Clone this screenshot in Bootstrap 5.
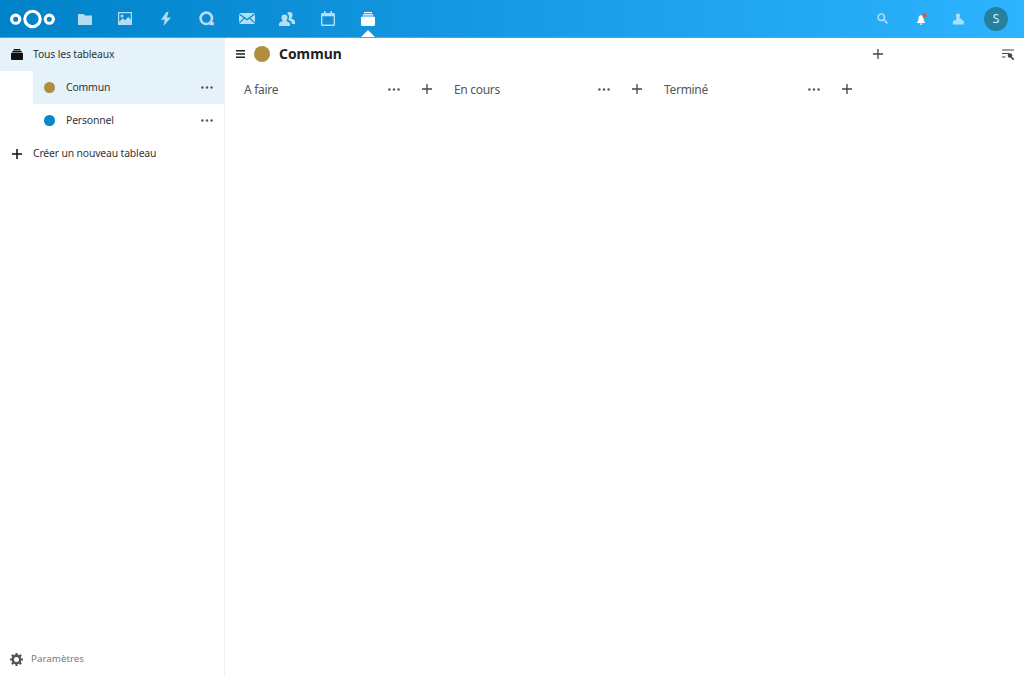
<!DOCTYPE html>
<html lang="fr">
<head>
<meta charset="utf-8">
<title>Deck</title>
<link href="https://cdn.jsdelivr.net/npm/bootstrap@5.3.0/dist/css/bootstrap.min.css" rel="stylesheet">
<style>
html,body{height:100%;overflow:hidden}
body{font-family:"Noto Sans","Open Sans",sans-serif;font-size:12px;color:#444;background:#fff}
.topbar{height:38px;background:linear-gradient(90deg,#0082c9 0%,#2db3ff 100%);border-bottom:1px solid #2db3fb;flex:none}
.logo{margin-left:10px;width:45px;height:20px;flex:none}
.apps{margin-left:9.5px}
.app{width:40.5px;height:37px;display:flex;align-items:center;justify-content:center;position:relative;opacity:.7}
.app.active{opacity:1}
.app.active::after{content:"";position:absolute;left:50%;bottom:0;margin-left:-7px;border:7px solid transparent;border-top:0;border-bottom-color:#fff}
.right-icon{width:38px;height:37px;display:flex;align-items:center;justify-content:center}
.dim{opacity:.6}
.avatar{width:24px;height:24px;border-radius:50%;background:#25829f;color:#d5eaf5;font-size:12.5px;line-height:24px;text-align:center;margin:0 16px 0 7px}
.sidebar{width:225px;border-right:1px solid #eee;flex:none}
.row-item{height:33px;display:flex;align-items:center;font-size:10.4px;letter-spacing:-.15px;color:#333}
.row-item.on{background:#e5f2fa}
.lead-icon{width:33px;display:flex;justify-content:center;flex:none}
.sub{margin-left:33px;padding-left:11px}
.sub .dot{width:10.5px;height:10.5px;border-radius:50%;margin-right:11.5px;flex:none}
.sub .more{margin-left:auto;margin-right:11px;width:12px}
.settings{height:32px;padding-left:10px;font-size:9.8px;letter-spacing:0;color:#7b7b7b;gap:8px}
.main-head{height:33px;padding-left:11px;padding-bottom:1px}
.board-dot{width:16px;height:16px;border-radius:50%;background:#b08d3f;margin:0 9px 0 9px;flex:none}
.title{font-size:13.9px;font-weight:700;color:#222}
.add-card{margin-left:auto;margin-right:119px}
.stack-list{padding-left:19px}
.stack{width:210px;height:36px;display:flex;align-items:center;font-size:12px;letter-spacing:-.3px;color:#555}
.stack .name{width:144px;padding-top:2px}
.stack .more{width:14px;margin-right:20px}
.filter{margin-right:10px}
.bell{margin-left:4px}
svg{display:block}
</style>
</head>
<body class="d-flex flex-column">
<nav class="topbar d-flex align-items-center">
  <svg class="logo" viewBox="0 0 45 20" aria-label="Nextcloud">
    <g fill="none" stroke="#fff" stroke-width="3.100"><circle cx="22.500" cy="10" r="7.700"/><circle cx="5.700" cy="10.200" r="4.100"/><circle cx="39.300" cy="10.200" r="4.100"/></g>
  </svg>
  <div class="apps d-flex">
    <div class="app"><svg width="14" height="14" viewBox="0 0 14 14"><path fill="#fff" d="M0 2h5.500l1.500 1.600h7V13H0z"/></svg></div>
    <div class="app"><svg width="14" height="13" viewBox="0 0 14 13"><path fill="#fff" fill-rule="evenodd" d="M0 0h14v13H0zM1.200 1.200v8.200l3.600-3.200 2.400 2 3-3.500 2.600 3V1.200zM4 2.500a1.500 1.500 0 1 1 0 3 1.500 1.500 0 0 1 0-3z"/></svg></div>
    <div class="app"><svg width="10" height="14" viewBox="0 0 10 14"><path fill="#fff" d="M5.500 0 0 7.800h3.700L2.600 14 10 5.500H5.800L7.600 0z"/></svg></div>
    <div class="app"><svg width="15" height="15" viewBox="0 0 15 15"><circle cx="7.300" cy="7.300" r="5.700" fill="none" stroke="#fff" stroke-width="2.600"/><path fill="#fff" d="M10 11h4.800v3.200H11z"/></svg></div>
    <div class="app"><svg width="16" height="11" viewBox="0 0 16 11"><path fill="#fff" d="M0 0h16L8 5.800zM0 1.500v8l4.600-4.600zM16 1.500v8l-4.600-4.600zM5.500 5.700 0 11h16l-5.500-5.300L8 7.500z"/></svg></div>
    <div class="app"><svg width="16" height="14" viewBox="0 0 16 14"><path fill="#fff" d="M10.500 0a3 3 0 0 1 3 3.200c0 1.600-.8 2.600-1.500 3.300 1.600.6 4 1.200 4 3.200V12h-3c0-2.500-2-3.400-3.800-4.300.8-1.200 1-2.200.7-3.700C9.500 2.500 8.900 1.300 8 .9 8.700.3 9.500 0 10.500 0zM5.500 2.500a3 3 0 0 1 3 3.200c0 1.600-.8 2.600-1.500 3.300 1.600.6 4 1.200 4 3.200V14H0v-1.800c0-2 2.400-2.600 4-3.200-.7-.7-1.500-1.700-1.500-3.300a3 3 0 0 1 3-3.200z"/></svg></div>
    <div class="app"><svg width="14" height="15" viewBox="0 0 14 15"><path fill="#fff" fill-rule="evenodd" d="M3 0h1.600v2h4.800V0H11v2h1.500A1.500 1.500 0 0 1 14 3.500v10a1.500 1.500 0 0 1-1.500 1.500h-11A1.500 1.500 0 0 1 0 13.500v-10A1.500 1.500 0 0 1 1.500 2H3zM1.400 5.200v8.400h11.200V5.200z"/></svg></div>
    <div class="app active"><svg width="14" height="14" viewBox="0 0 14 14"><path fill="#fff" d="M3 0h8v1.300H3zM1.800 2.200h10.400v1.400H1.800zM1.500 4.600h11A1.500 1.500 0 0 1 14 6v6.500a1.500 1.500 0 0 1-1.500 1.500h-11A1.500 1.500 0 0 1 0 12.500V6a1.500 1.500 0 0 1 1.500-1.500z"/></svg></div>
  </div>
  <div class="ms-auto d-flex align-items-center">
    <div class="right-icon dim"><svg width="11" height="11" viewBox="0 0 11 11"><circle cx="4.300" cy="4.300" r="3.200" fill="none" stroke="#fff" stroke-width="1.500"/><path stroke="#fff" stroke-width="1.800" d="m6.700 6.700 3.700 3.700"/></svg></div>
    <div class="right-icon"><svg class="bell" width="12" height="12" viewBox="0 0 12 12"><path fill="#fff" d="M4.500 2.200C2.800 2.800 2.500 4 2.500 5.500c0 1.800-.6 2.800-1.500 3.500v1h8V9c-.9-.7-1.500-1.700-1.500-3.500 0-1.500-.3-2.700-2-3.300zM3.700 10.500h2.600a1.300 1.300 0 0 1-2.600 0z"/><circle cx="8.500" cy="2.500" r="2.300" fill="#e5533a"/></svg></div>
    <div class="right-icon dim"><svg width="12" height="12" viewBox="0 0 14 13"><path fill="#fff" d="M7 0a2.400 2.400 0 0 1 2.400 2.700c0 1.200-.6 2-1.200 2.600 1.500.5 3.800 1 3.800 2.800l2 1V12a1 1 0 0 1-1 1H2a1 1 0 0 1-1-1V9.500l1-.6c0-.6.500-1.300 1.300-1.500L4.600 9V6.600l1-1.300c-.6-.6-1.100-1.400-1.100-2.600A2.400 2.400 0 0 1 7 0z"/></svg></div>
    <div class="avatar">S</div>
  </div>
</nav>
<div class="d-flex flex-grow-1" style="min-height:0">
  <aside class="sidebar d-flex flex-column">
    <div class="row-item on"><span class="lead-icon"><svg width="12" height="11" viewBox="0 0 12 11"><path fill="#111" d="M3 0h6l.7 1.200H2.300zM1.800 1.800h8.400l.8 1.400H1zM1 3.700h10a1 1 0 0 1 1 1v5.300a1 1 0 0 1-1 1H1a1 1 0 0 1-1-1V4.700a1 1 0 0 1 1-1z"/></svg></span>Tous les tableaux</div>
    <div class="row-item sub on"><span class="dot" style="background:#b08d3f"></span>Commun<span class="more"><svg width="12" height="3" viewBox="0 0 12 3"><g fill="#555"><circle cx="1.400" cy="1.500" r="1.200"/><circle cx="6" cy="1.500" r="1.200"/><circle cx="10.600" cy="1.500" r="1.200"/></g></svg></span></div>
    <div class="row-item sub"><span class="dot" style="background:#0a87c7"></span>Personnel<span class="more"><svg width="12" height="3" viewBox="0 0 12 3"><g fill="#555"><circle cx="1.400" cy="1.500" r="1.200"/><circle cx="6" cy="1.500" r="1.200"/><circle cx="10.600" cy="1.500" r="1.200"/></g></svg></span></div>
    <div class="row-item"><span class="lead-icon"><svg width="10" height="10" viewBox="0 0 10 10"><path stroke="#111" stroke-width="1.500" d="M5 0v10M0 5h10"/></svg></span>Créer un nouveau tableau</div>
    <div class="row-item settings mt-auto"><svg width="13" height="13" viewBox="0 0 13 13"><circle cx="6.500" cy="6.500" r="3.700" fill="none" stroke="#555" stroke-width="2.400"/><g stroke="#555" stroke-width="2.200"><path d="M6.500 0v2.500M6.500 10.500V13M0 6.500h2.500M10.500 6.500H13M1.900 1.900l1.800 1.800M9.300 9.300l1.800 1.800M1.900 11.100l1.800-1.800M9.300 3.700l1.800-1.800"/></g></svg>Paramètres</div>
  </aside>
  <main class="flex-grow-1 d-flex flex-column">
    <div class="main-head d-flex align-items-center">
      <svg width="9" height="8" viewBox="0 0 9 8"><path stroke="#222" stroke-width="1.400" d="M0 .8h9M0 4h9M0 7.200h9"/></svg>
      <span class="board-dot"></span>
      <span class="title">Commun</span>
      <svg class="add-card" width="10" height="10" viewBox="0 0 10 10"><path stroke="#444" stroke-width="1.300" d="M5 0v10M0 5h10"/></svg>
      <svg class="filter" width="12" height="11" viewBox="0 0 12 11"><path stroke="#444" stroke-width="1.200" d="M0 1h12M0 4.500h7M0 8h3.500"/><circle cx="8" cy="6.500" r="2.300" fill="#444"/><path stroke="#444" stroke-width="1.700" d="m9 8 2.700 2.700"/></svg>
    </div>
    <div class="stack-list d-flex">
      <div class="stack"><span class="name">A faire</span><span class="more"><svg width="12" height="3" viewBox="0 0 12 3"><g fill="#555"><circle cx="1.400" cy="1.500" r="1.200"/><circle cx="6" cy="1.500" r="1.200"/><circle cx="10.600" cy="1.500" r="1.200"/></g></svg></span><svg width="10" height="10" viewBox="0 0 10 10"><path stroke="#444" stroke-width="1.300" d="M5 0v10M0 5h10"/></svg></div>
      <div class="stack"><span class="name">En cours</span><span class="more"><svg width="12" height="3" viewBox="0 0 12 3"><g fill="#555"><circle cx="1.400" cy="1.500" r="1.200"/><circle cx="6" cy="1.500" r="1.200"/><circle cx="10.600" cy="1.500" r="1.200"/></g></svg></span><svg width="10" height="10" viewBox="0 0 10 10"><path stroke="#444" stroke-width="1.300" d="M5 0v10M0 5h10"/></svg></div>
      <div class="stack"><span class="name">Terminé</span><span class="more"><svg width="12" height="3" viewBox="0 0 12 3"><g fill="#555"><circle cx="1.400" cy="1.500" r="1.200"/><circle cx="6" cy="1.500" r="1.200"/><circle cx="10.600" cy="1.500" r="1.200"/></g></svg></span><svg width="10" height="10" viewBox="0 0 10 10"><path stroke="#444" stroke-width="1.300" d="M5 0v10M0 5h10"/></svg></div>
    </div>
  </main>
</div>
<script src="https://cdn.jsdelivr.net/npm/bootstrap@5.3.0/dist/js/bootstrap.bundle.min.js"></script>
</body>
</html>
